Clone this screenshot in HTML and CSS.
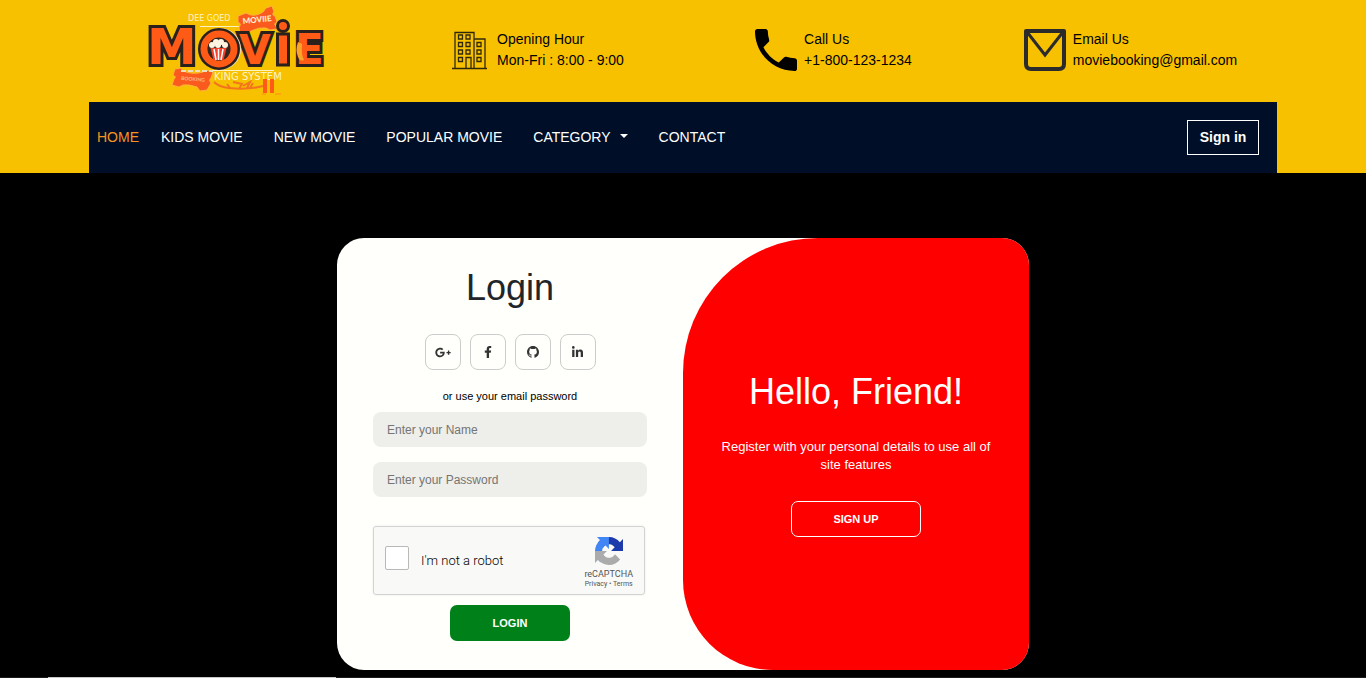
FILE: index.html
```html
<!DOCTYPE html>
<html lang="en">
<head>
<meta charset="utf-8">
<meta name="viewport" content="width=device-width, initial-scale=1">
<title>Movie Booking System - Login</title>
<link rel="stylesheet" href="styles.css">
</head>
<body>
<header class="site-header">
  <div class="container">
    <div class="topbar">
      <a class="logo" href="#" aria-label="Movie Booking System">
        <svg width="182" height="98" viewBox="0 0 182 98">
          <g fill="#fff3c4" font-family="DejaVu Sans, sans-serif">
            <text x="41" y="20" font-size="8">DEE GOED</text>
            <text x="67" y="79" font-size="10">KING SYSTEM</text>
          </g>
          <path d="M53 25.500H92M65 69.500H127" stroke="#fff3c4" stroke-width="1"/>
          <path d="M91 12l8-3q8 5 17-1l3-4 6-2 2 6q-3 3 1 4l2 6q-4 2-1 4l1 3-7 1-4-2q-7-1-15 3l-3 2-8 1-1-7q3-3-1-5z" transform="translate(0 3)" fill="#fb5a1e" stroke="#ffb13a"/>
          <g class="logo-word">
            <text x="0" y="63" font-size="50">M</text>
            <text x="92" y="63" font-size="41">V</text>
            <text x="148" y="63" font-size="42">E</text>
          </g>
          <text x="96" y="23" font-size="8" font-weight="900" font-family="Lato, sans-serif" fill="#fff0d2" transform="rotate(-6 96 23)">MOVIIE</text>
          <circle cx="73" cy="48" r="15" fill="none" stroke="#eadfc4" stroke-width="12"/>
          <circle cx="72" cy="48" r="15" fill="none" stroke="#2b211c" stroke-width="12"/>
          <circle cx="72" cy="48" r="15" fill="none" stroke="#ff5b17" stroke-width="7"/>
          <circle cx="72" cy="48" r="11" fill="#332721"/>
          <path d="M63.500 47h16l-3 12h-10z" fill="#f4412c"/>
          <path d="M67 48l2 11M71.500 48v11M76 48l-2 11" stroke="#fff" stroke-width="1.500"/>
          <g fill="#fff4e1"><circle cx="65" cy="44" r="3"/><circle cx="69" cy="41" r="3"/><circle cx="74" cy="41" r="3"/><circle cx="78" cy="44" r="3"/><circle cx="71" cy="44" r="3"/></g>
          <path d="M130.500 33h11v31h-11z" fill="#ff5b17" stroke="#2b211c" stroke-width="3"/>
          <circle cx="136" cy="25" r="5.500" fill="#ff5b17" stroke="#2b211c" stroke-width="3"/>
          <path d="M151 41q-3 8 0 15q2 5 6 3q-3-5-2-16z" fill="#f6a52a"/>
          <path d="M28 67l6-1 2 3q10 4 20 1l3-2 7 2-2 6q-3 2 0 5l-4 7-7 1-3-4q-9-3-14-2l-4 2-7-2 2-6q3-2-1-4z" transform="translate(0 1)" fill="#fb5a1e" stroke="#ffb13a"/>
          <path d="M34 70h32" stroke="#eee0be" stroke-width="2" stroke-dasharray="5 2"/>
          <text x="34" y="79" font-size="5" font-weight="700" fill="#ffb88a" font-family="Lato, sans-serif" transform="rotate(4 34 79)">BOOKING</text>
          <path d="M67 81q5 5 15 6q20 2 34-2M80 83l4 5M86 81l9 2-3 5M96 85l7-4-3 6M106 82l-3 5" fill="none" stroke="#f3741d" stroke-width="2"/>
          <path d="M118 78v14M125 78v14" stroke="#ff5b17" stroke-width="4"/>
          <path d="M115 93h4M128 93h6" stroke="#ff8a1c"/>
        </svg>
      </a>
      <div class="info info-hours">
        <svg width="36" height="42" viewBox="0 0 36 42" fill="none" stroke="#30280a" stroke-width="1.300">
          <path d="M0 39.500h35M3 39V3.500h19V39M22 10h11v29M14 39V28.500h5V39"/>
          <path d="M6.500 6h4v4h-4zM14 6h4v4h-4zM6.500 13.500h4v4h-4zM14 13.500h4v4h-4zM6.500 21h4v4h-4zM14 21h4v4h-4zM6.500 28.500h4v4h-4zM25 13.500h4v4h-4zM25 21h4v4h-4zM25 28.500h4v4h-4z"/>
        </svg>
        <p class="info-text">Opening Hour<br>Mon-Fri : 8:00 - 9:00</p>
      </div>
      <div class="info">
        <svg width="42" height="42" viewBox="3 3 18 18"><path d="M6.620 10.790c1.440 2.830 3.760 5.140 6.590 6.590l2.200-2.200c.27-.27.67-.36 1.020-.24 1.120.37 2.330.57 3.570.57.550 0 1 .45 1 1V20c0 .55-.45 1-1 1-9.390 0-17-7.610-17-17 0-.55.450-1 1-1h3.500c.550 0 1 .450 1 1 0 1.250.20 2.450.570 3.570.110.350.030.740-.250 1.020l-2.200 2.200z"/></svg>
        <p class="info-text">Call Us<br>+1-800-123-1234</p>
      </div>
      <div class="info">
        <svg width="42" height="42" viewBox="0 0 42 42" fill="none" stroke="#2b2b2b" stroke-width="4" stroke-linejoin="round">
          <path d="M2 2h38v33q0 5-5 5H7q-5 0-5-5z"/><path d="M3 3l18 23L39 3" stroke-width="3" stroke-linejoin="miter"/>
        </svg>
        <p class="info-text">Email Us<br>moviebooking@gmail.com</p>
      </div>
    </div>
    <nav class="navbar">
      <ul class="menu">
        <li><a class="active" href="#">HOME</a></li>
        <li><a href="#">KIDS MOVIE</a></li>
        <li><a href="#">NEW MOVIE</a></li>
        <li><a href="#">POPULAR MOVIE</a></li>
        <li><a class="dropdown" href="#">CATEGORY</a></li>
        <li><a href="#">CONTACT</a></li>
      </ul>
      <button class="sign-in" type="button">Sign in</button>
    </nav>
  </div>
</header>
<main class="page">
  <section class="card">
    <form class="login">
      <h1 class="title">Login</h1>
      <div class="social">
        <a href="#" aria-label="Google Plus"><svg width="16" height="13" viewBox="0 0 640 512"><path d="M386.061 228.496c1.834 9.692 3.143 19.384 3.143 31.956C389.204 370.205 315.599 448 204.800 448c-106.084 0-192-85.915-192-192s85.916-192 192-192c51.864 0 95.083 18.859 128.611 50.292l-52.126 50.030c-14.145-13.621-39.028-29.599-76.485-29.599-65.484 0-118.920 54.221-118.920 121.277 0 67.056 53.436 121.277 118.920 121.277 75.961 0 104.513-54.745 108.965-82.773H204.800v-66.009h181.261zm185.406 6.437V179.200h-56.001v55.733h-55.733v56.001h55.733v55.733h56.001v-55.733H627.200v-56.001h-55.733z"/></svg></a>
        <a href="#" aria-label="Facebook"><svg width="8" height="12" viewBox="0 0 320 512"><path d="M279.140 288l14.220-92.660h-88.910v-60.130c0-25.350 12.420-50.060 52.240-50.060h40.420V6.260S260.430 0 225.360 0c-73.220 0-121.080 44.380-121.080 124.720v70.620H22.890V288h81.390v224h100.170V288z"/></svg></a>
        <a href="#" aria-label="GitHub"><svg width="12" height="12" viewBox="0 0 16 16"><path d="M8 0C3.580 0 0 3.580 0 8c0 3.540 2.290 6.530 5.470 7.590.4.070.550-.170.550-.380 0-.190-.010-.820-.010-1.490-2.010.370-2.530-.490-2.690-.940-.090-.230-.480-.940-.820-1.130-.280-.150-.680-.520-.010-.530.630-.010 1.080.580 1.230.820.720 1.210 1.870.870 2.330.660.070-.520.280-.870.510-1.070-1.780-.2-3.640-.890-3.640-3.950 0-.870.310-1.590.820-2.150-.080-.2-.360-1.020.080-2.120 0 0 .670-.210 2.200.820.640-.180 1.320-.270 2-.270s1.360.090 2 .270c1.530-1.040 2.200-.820 2.200-.820.440 1.100.160 1.920.080 2.120.510.560.820 1.270.820 2.150 0 3.070-1.870 3.750-3.650 3.950.290.250.540.730.540 1.480 0 1.070-.010 1.930-.010 2.200 0 .210.150.460.550.380A8.010 8.010 0 0 0 16 8c0-4.420-3.580-8-8-8z"/></svg></a>
        <a href="#" aria-label="LinkedIn"><svg width="11" height="12" viewBox="0 0 448 480"><path d="M100.280 448H7.400V148.900h92.880zM53.790 108.100C24.090 108.100 0 83.500 0 53.800a53.790 53.790 0 0 1 107.580 0c0 29.700-24.100 54.300-53.790 54.300zM447.900 448h-92.680V302.400c0-34.700-.7-79.200-48.290-79.200-48.290 0-55.690 37.700-55.690 76.700V448h-92.780V148.900h89.080v40.800h1.300c12.400-23.500 42.690-48.300 87.880-48.300 94 0 111.280 61.900 111.280 142.300V448z"/></svg></a>
      </div>
      <p class="hint">or use your email password</p>
      <input class="field" type="text" placeholder="Enter your Name" aria-label="Name">
      <input class="field" type="password" placeholder="Enter your Password" aria-label="Password">
      <div class="captcha">
        <input class="robot-box" type="checkbox" id="robot">
        <label for="robot">I'm not a robot</label>
        <div class="captcha-brand">
          <svg width="28" height="28" viewBox="0 0 64 64">
            <path fill="#1c3aa9" d="M64 31.955l-.033-1.370V4.687l-7.160 7.160C50.948 4.674 42.033.093 32.050.093c-10.400 0-19.622 4.960-25.458 12.640l11.736 11.860a15.550 15.550 0 0 1 4.754-5.334c2.050-1.600 4.952-2.906 8.968-2.906.485 0 .860.057 1.135.163 4.976.393 9.288 3.140 11.828 7.124l-8.307 8.307L64 31.953"/>
            <path fill="#4285f4" d="M31.862.094l-1.370.033H4.594l7.160 7.160C4.580 13.147 0 22.060 0 32.046c0 10.400 4.960 19.622 12.640 25.458L24.500 45.768a15.550 15.550 0 0 1-5.334-4.754c-1.600-2.050-2.906-4.952-2.906-8.968 0-.485.057-.860.163-1.135.393-4.976 3.140-9.288 7.124-11.828l8.307 8.307L31.860.095"/>
            <path fill="#ababab" d="M.001 32.045l.033 1.370v25.898l7.160-7.160c5.860 7.173 14.774 11.754 24.760 11.754 10.400 0 19.622-4.960 25.458-12.640l-11.736-11.860a15.550 15.550 0 0 1-4.754 5.334c-2.050 1.600-4.952 2.906-8.968 2.906-.485 0-.860-.057-1.135-.163-4.976-.393-9.288-3.140-11.828-7.124l8.307-8.307c-10.522.040-22.400.066-27.295-.005"/>
          </svg>
          <span class="captcha-name">reCAPTCHA</span>
          <span class="captcha-links"><a href="#">Privacy</a> • <a href="#">Terms</a></span>
        </div>
      </div>
      <button class="btn btn-login" type="submit">LOGIN</button>
    </form>
    <div class="welcome">
      <h2 class="title">Hello, Friend!</h2>
      <p class="welcome-text">Register with your personal details to use all of site features</p>
      <button class="btn btn-signup" type="button">SIGN UP</button>
    </div>
  </section>
</main>
<footer class="footer"><div class="footer-panel"></div></footer>
</body>
</html>
```
FILE: styles.css
```css
* {
  box-sizing: border-box;
}

body {
  display: flex;
  flex-direction: column;
  min-height: 100vh;
  margin: 0;
  background: #000;
  color: #212529;
  font-family: "Liberation Sans", Arial, sans-serif;
  font-size: 14px;
}

h1, h2, p, ul {
  margin: 0;
}

a {
  color: inherit;
  text-decoration: none;
}

svg {
  display: block;
  flex: none;
}

button, input {
  font-family: inherit;
}

.site-header {
  background: #f7c100;
}

.container {
  max-width: 1188px;
  margin: 0 auto;
}

.topbar {
  display: grid;
  grid-template-columns: repeat(4, 1fr);
  align-items: center;
  height: 102px;
  padding-bottom: 2px;
}

.logo {
  justify-self: center;
}

.logo-word {
  fill: #ff5b17;
  stroke: #2b211c;
  stroke-width: 6px;
  paint-order: stroke;
  font-family: "DejaVu Sans", sans-serif;
  font-weight: 700;
}

.info {
  display: flex;
  align-items: center;
  justify-content: center;
  gap: 7px;
  padding-left: 4px;
  color: #000;
}

.info-hours {
  gap: 9px;
  padding-left: 7px;
}

.info-text {
  line-height: 21px;
  white-space: nowrap;
}

.navbar {
  display: flex;
  align-items: center;
  justify-content: space-between;
  height: 71px;
  padding: 0 18px 0 8px;
  background: #000f27;
  color: #fff;
}

.menu {
  display: flex;
  gap: 31px;
  padding: 0 0 2px;
  list-style: none;
}

.menu li:first-child {
  margin-right: -9px;
}

.active {
  color: #f7931e;
}

.dropdown::after {
  content: "";
  display: inline-block;
  margin-left: 9px;
  vertical-align: 4px;
  border: 4px solid transparent;
  border-top-color: #fff;
  border-bottom: 0;
}

.sign-in {
  width: 72px;
  height: 35px;
  padding: 0 0 2px;
  border: 1px solid #fff;
  background: transparent;
  color: #fff;
  font-size: 14px;
  font-weight: 700;
}

.page {
  flex: 1;
  padding: 65px 16px 7px;
}

.card {
  display: grid;
  grid-template-columns: 1fr 1fr;
  max-width: 692px;
  margin: 0 auto;
  overflow: hidden;
  border-radius: 27px;
  background: #fffffb;
}

.login {
  display: flex;
  flex-direction: column;
  align-items: center;
  padding: 28px 36px 29px;
}

.title {
  font-size: 36px;
  font-weight: 400;
  line-height: 43px;
}

.social {
  display: flex;
  gap: 9px;
  margin: 25px 0 18px;
}

.social a {
  display: grid;
  place-items: center;
  width: 36px;
  height: 36px;
  border: 1px solid #ccc;
  border-radius: 8px;
  fill: #333;
}

.hint {
  margin-bottom: 8px;
  color: #000;
  font-size: 11px;
  line-height: 16px;
}

.field {
  width: 100%;
  height: 35px;
  margin-bottom: 15px;
  padding: 0 14px;
  border: 0;
  border-radius: 8px;
  background: #eeeeea;
  font-size: 12px;
}

.field::placeholder {
  color: #757575;
}

.captcha {
  display: flex;
  align-items: center;
  align-self: stretch;
  height: 69px;
  margin: 14px 2px 10px 0;
  padding: 0 11px;
  border: 1px solid #d3d3d3;
  border-radius: 3px;
  background: #f9f9f7;
  box-shadow: 0 0 3px rgba(0, 0, 0, 0.08);
  color: #000;
  font-family: Roboto, sans-serif;
  font-size: 13px;
  font-weight: 300;
}

.robot-box {
  appearance: none;
  width: 24px;
  height: 24px;
  margin: 0 12px 5px 0;
  border: 1px solid #b9b9b9;
  border-radius: 2px;
  background: #fff;
}

.captcha-brand {
  display: flex;
  flex-direction: column;
  align-items: center;
  margin: 4px 0 0 auto;
  color: #555;
  font-weight: 400;
}

.captcha-name {
  margin-top: 3px;
  font-size: 9px;
  line-height: 12px;
}

.captcha-links {
  font-size: 7px;
  line-height: 9px;
}

.btn {
  width: 130px;
  height: 36px;
  padding: 0;
  border: 1px solid #fff;
  border-radius: 7px;
  background: transparent;
  color: #fff;
  font-size: 11px;
  font-weight: 700;
}

.btn-login {
  width: 120px;
  border: 0;
  background: #008018;
}

.welcome {
  display: flex;
  flex-direction: column;
  align-items: center;
  justify-content: center;
  padding: 0 27px 2px;
  border-radius: 135px 0 0 90px;
  background: #f00;
  color: #fff;
  text-align: center;
}

.welcome-text {
  margin: 25px 0 27px;
  font-size: 13px;
  line-height: 18px;
}

.footer {
  height: 1px;
  padding-left: 48px;
  background: #1c1c1c;
}

.footer-panel {
  width: 288px;
  height: 1px;
  background: #c8c8c8;
}
```
